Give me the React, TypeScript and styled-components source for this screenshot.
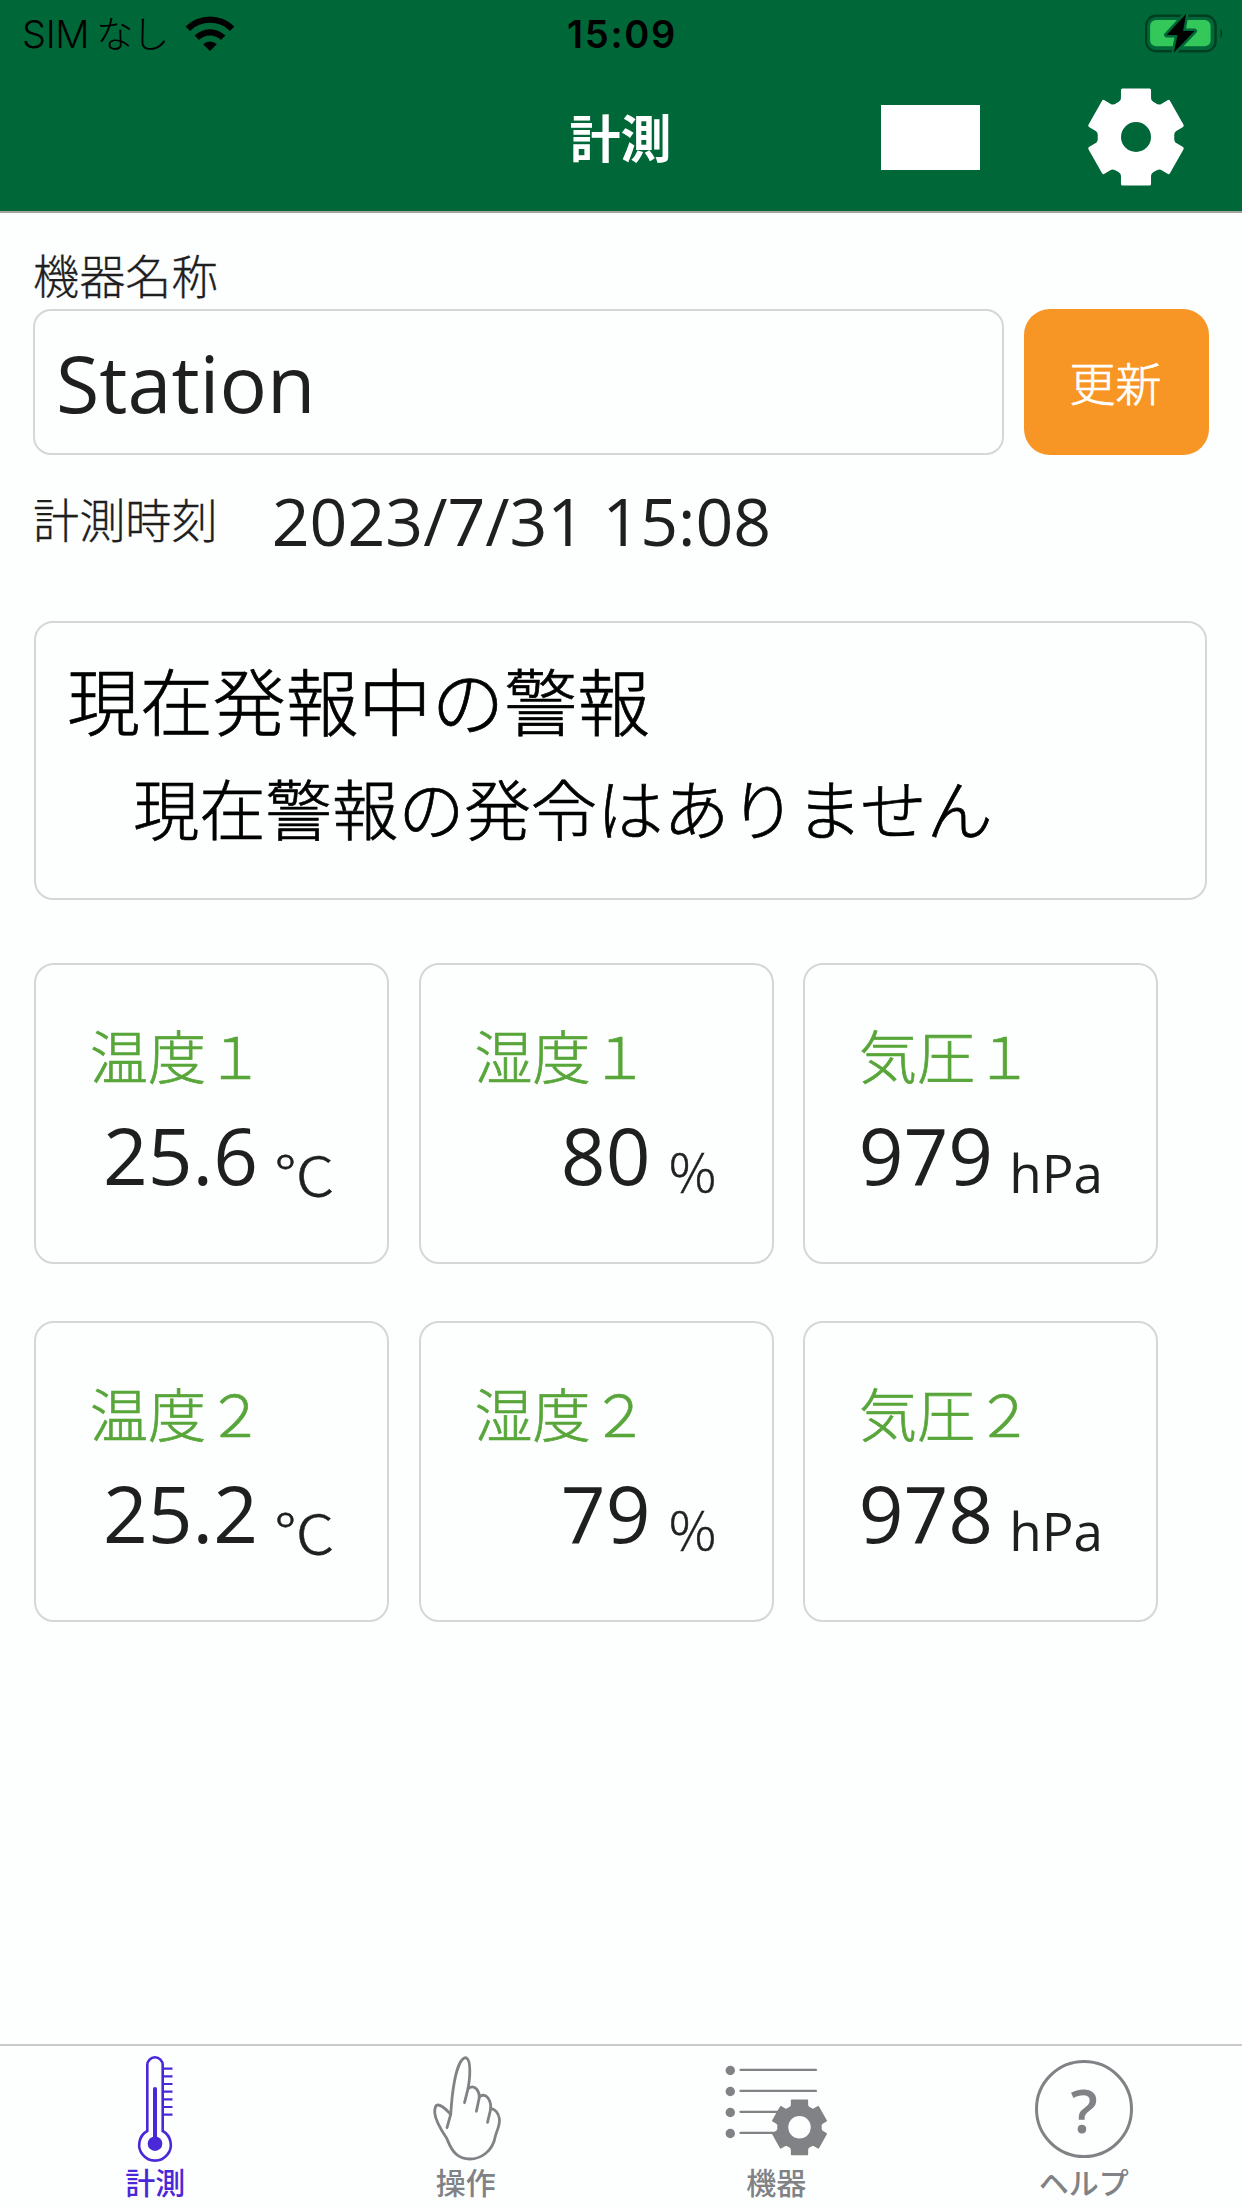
import React from "react";
import styled, { createGlobalStyle } from "styled-components";

const GREEN = "#006838";
const PURPLE = "#4a28d8";
const GRAY = "#808285";
const JP = `"Noto Sans CJK JP", sans-serif`;

const GlobalStyle = createGlobalStyle`
  html, body { margin: 0; padding: 0; }
  body { background: #fdfefe; }
  * { box-sizing: border-box; }
`;

const Screen = styled.div`
  width: 1242px;
  height: 2208px;
  display: flex;
  flex-direction: column;
  background: #fdfefe;
  color: #1f1f1f;
  font-family: "Open Sans", "Noto Sans", ${JP};
  font-weight: 380;
  overflow: hidden;
`;

const Header = styled.header`
  height: 213px;
  flex: none;
  background: ${GREEN};
  border-bottom: 2px solid #a5a5a0;
`;

const StatusBar = styled.div`
  height: 67px;
  padding: 0 17px 0 22px;
  display: grid;
  grid-template-columns: 1fr auto 1fr;
  align-items: center;
  color: #000;
`;

const Carrier = styled.div`
  display: flex;
  align-items: center;
  font: 350 38px/67px Inter, ${JP};
  white-space: nowrap;
`;

const CarrierLatin = styled.span`
  padding-top: 1px;
  letter-spacing: -0.3px;
  margin-right: 7px;
`;

const CarrierKana = styled.span`
  font-size: 37px;
  font-weight: 300;
  letter-spacing: -1px;
  margin-right: 17px;
`;

const Clock = styled.div`
  margin-right: 3px;
  padding-top: 1px;
  font: 600 38px/67px Inter, sans-serif;
  letter-spacing: 1.7px;
`;

const BatterySlot = styled.div`
  display: flex;
  justify-content: flex-end;
`;

const NavBar = styled.div`
  height: 140px;
  padding-right: 57px;
  display: grid;
  grid-template-columns: 1fr auto 1fr;
  align-items: center;
`;

const Title = styled.h1`
  grid-column: 2;
  margin: -2px 0 0 56px;
  color: #fff;
  font: 700 51px/80px ${JP};
`;

const NavActions = styled.div`
  display: flex;
  justify-content: flex-end;
  align-items: center;
  gap: 107px;
`;

const BlankButton = styled.button`
  width: 99px;
  height: 65px;
  padding: 0;
  border: 0;
  background: #fff;
`;

const Content = styled.main`
  flex: 1;
  padding: 31px 33px 0;
`;

const FieldLabel = styled.label`
  display: block;
  font: 300 46.2px/60px ${JP};
  -webkit-text-stroke: 0.3px currentColor;
`;

const NameRow = styled.div`
  display: flex;
  gap: 20px;
  margin-top: 5px;
`;

const NameInput = styled.div`
  flex: 1;
  height: 146px;
  padding-left: 21px;
  border: 2px solid #d6d6d6;
  border-radius: 18px;
  font-size: 79px;
  line-height: 143px;
`;

const UpdateButton = styled.button`
  width: 185px;
  height: 146px;
  padding: 0 2px 3px 0;
  border: 0;
  border-radius: 26px;
  background: #f79624;
  color: #fff;
  font: 300 46px/142px ${JP};
  -webkit-text-stroke: 0.7px currentColor;
`;

const TimeRow = styled.div`
  height: 80px;
  margin-top: 25px;
  display: flex;
  align-items: center;
  gap: 54px;
`;

const TimeLabel = styled(FieldLabel)`
  padding-bottom: 4px;
`;

const TimeValue = styled.div`
  font-size: 66.2px;
  line-height: 80px;
`;

const AlertPanel = styled.section`
  width: 1173px;
  height: 279px;
  margin: 61px 0 0 1px;
  padding: 21px 0 0 31px;
  border: 2px solid #d6d6d6;
  border-radius: 19px;
  color: #000;
`;

const AlertTitle = styled.h2`
  margin: 0;
  font: 300 72.9px/108px ${JP};
  -webkit-text-stroke: 0.7px currentColor;
`;

const AlertText = styled.p`
  margin: 0;
  padding-left: 66px;
  font: 300 66.3px/108px ${JP};
  -webkit-text-stroke: 0.7px currentColor;
`;

const Cards = styled.div`
  display: grid;
  grid-template-columns: repeat(3, 355px);
  gap: 57px 29.5px;
  margin: 63px 0 0 1px;
`;

const Card = styled.article`
  height: 301px;
  padding: 49px 53px 0 54px;
  border: 2px solid #d6d6d6;
  border-radius: 20px;
`;

const CardLabel = styled.h3`
  margin: 0 -20px 0 0;
  color: #58a63a;
  font: 300 58px/80px ${JP};
  -webkit-text-stroke: 0.7px currentColor;
  white-space: nowrap;
`;

const Reading = styled.div`
  display: flex;
  justify-content: flex-end;
  align-items: center;
  gap: 16px;
  margin: 10px 0 0 -8px;
  height: 100px;
  font-size: 78.4px;
  line-height: 101px;
`;

const Unit = styled.span`
  padding-top: 37px;
  font: 380 53px/60px "Open Sans", "Noto Sans", sans-serif;
`;

const PercentUnit = styled(Unit)`
  padding-top: 34px;
  font: 350 52px/60px ${JP};
  font-weight: 300;
  -webkit-text-stroke: 0.5px currentColor;
`;

const CelsiusUnit = styled(PercentUnit)`
  padding-top: 35px;
  margin-right: -1px;
  font-size: 61px;
  transform: scaleY(0.9);
  transform-origin: 50% 68px;
`;

const TabBar = styled.nav`
  height: 164px;
  flex: none;
  display: grid;
  grid-template-columns: repeat(4, 1fr);
  border-top: 2px solid #cacaca;
`;

const Tab = styled.a<{ $active?: boolean }>`
  display: flex;
  flex-direction: column;
  align-items: center;
  color: ${(p) => (p.$active ? PURPLE : GRAY)};
  font: 500 30px/38px ${JP};
`;

const TabIcon = styled.div`
  height: 116px;
  display: flex;
`;

const HelpCircle = styled.div`
  width: 98px;
  height: 98px;
  margin: 14px 5px 0 0;
  border: 3px solid ${GRAY};
  border-radius: 50%;
  text-align: center;
  font: 600 60px/94px "Open Sans", "Noto Sans", sans-serif;
`;

const HelpLabel = styled.span`
  margin-right: 6px;
`;

function Wifi() {
  return (
    <svg width="50" height="36" viewBox="-25 -35 50 36">
      <path d="M-24.4-24.4A34.5 34.5 0 0 1 24.4-24.4L20-20A28.3 28.3 0 0 0-20-20Z" />
      <path d="M-15.4-15.4A21.8 21.8 0 0 1 15.4-15.4L11-11A15.6 15.6 0 0 0-11-11Z" />
      <path d="M-6.8-6.8A9.6 9.6 0 0 1 6.8-6.8L0 0Z" />
    </svg>
  );
}

function Battery() {
  return (
    <svg width="80" height="42" viewBox="1145.4 12 80 42">
      <rect x="1146.5" y="14.8" width="69.5" height="35.4" rx="10" fill="none" stroke="#000" strokeOpacity=".4" strokeWidth="2.4" />
      <rect x="1150.5" y="19" width="60.5" height="26.2" rx="6" fill="#34c759" />
      <path d="M1221 27q3 5.500 0 11z" fillOpacity=".5" />
      <path
        d="M1186.500 12.700L1167 34H1178L1174.300 51.500L1195 30H1183.500Z"
        stroke={GREEN}
        strokeWidth="5"
        strokeLinejoin="round"
        paintOrder="stroke"
      />
    </svg>
  );
}

const ANGLES = [0, 60, 120, 180, 240, 300];

function GearShape({ hole, holeRadius }: { hole: string; holeRadius: number }) {
  return (
    <>
      <g transform="scale(.97 1)">
        <circle r="39" />
        {ANGLES.map((a) => (
          <path
            key={a}
            transform={`rotate(${a})`}
            d="M-19-30L-20-34Q-15.500-36-15.500-39V-47Q-15.500-48.500-14-48.500H14Q15.500-48.500 15.500-47V-39Q15.500-36 20-34L19-30Z"
          />
        ))}
      </g>
      <circle r={holeRadius} fill={hole} />
    </>
  );
}

function Thermometer() {
  return (
    <svg width="70" height="116" viewBox="120 2046 70 116" fill="none" stroke="currentColor" strokeWidth="2.600">
      <path d="M147.300 2131V2065A7.700 7.700 0 0 1 162.700 2065V2131A15.800 15.800 0 1 1 147.300 2131Z" />
      <path d="M155 2089V2144" strokeWidth="4" strokeLinecap="round" />
      <circle cx="155" cy="2143.700" r="7.300" fill="currentColor" stroke="none" />
      <path
        d="M163 2068.700h9.500M163 2076.400h9.500M163 2084h9.500M163 2091.700h9.500M163 2099.400h9.500M163 2107h9.500M163 2114.700h9.500"
        strokeWidth="2.200"
      />
    </svg>
  );
}

function Hand() {
  return (
    <svg width="76" height="116" viewBox="-2 -4 76 116" fill="none" stroke="currentColor" strokeWidth="2.800" strokeLinecap="round" strokeLinejoin="round">
      <path d="M20.700 64.300C21.500 53 22 45 24 34C26 22 30 8.500 35.500 7.700C39.500 8.500 40 18 39.700 25C39.500 31 38.500 36 37.700 40L34.500 52.700" />
      <path d="M38 39C40 36.500 44 36 46.500 39C49 42 49.500 45 49.200 48L46.400 61.300" />
      <path d="M49.200 47C52 44.500 55.500 44.500 58 48C60.500 51.500 61 55 60.700 59L57.500 72.300" />
      <path d="M60.700 58.500C65 59 68.500 63 69.400 69C70.200 75 67 80 65.400 86C64 94 60 100 55.500 103.500C46 111 33 110.500 26 104C20 98.500 19 93 16.700 88.300C10.500 79 5.500 70 4.800 63.300C4.500 58 5.500 55 8 55C12.500 55 16 59.500 20.700 64.300L17 77.700" />
    </svg>
  );
}

function DeviceList() {
  return (
    <svg width="104" height="116" viewBox="724 2046 104 116" fill="currentColor">
      {[2070.5, 2091.5, 2112.5, 2133.5].map((y, i) => (
        <g key={y}>
          <circle cx="730.300" cy={y} r="4.700" />
          <path d={`M740.500 ${y - 0.6}H${i < 2 ? 816 : 780}`} stroke="currentColor" strokeWidth="2.200" strokeLinecap="round" />
        </g>
      ))}
      <g transform="translate(799.500 2127.300) scale(.575)">
        <GearShape hole="#fdfefe" holeRadius={19.5} />
      </g>
    </svg>
  );
}

type Sensor = { label: string; value: string; unit: string };

const SENSORS: Sensor[] = [
  { label: "温度１", value: "25.6", unit: "℃" },
  { label: "湿度１", value: "80", unit: "％" },
  { label: "気圧１", value: "979", unit: "hPa" },
  { label: "温度２", value: "25.2", unit: "℃" },
  { label: "湿度２", value: "79", unit: "％" },
  { label: "気圧２", value: "978", unit: "hPa" },
];

function unitComponent(unit: string) {
  if (unit === "℃") return CelsiusUnit;
  if (unit === "％") return PercentUnit;
  return Unit;
}

function SensorCard({ label, value, unit }: Sensor) {
  const UnitText = unitComponent(unit);
  return (
    <Card>
      <CardLabel>{label}</CardLabel>
      <Reading>
        <span>{value}</span>
        <UnitText>{unit}</UnitText>
      </Reading>
    </Card>
  );
}

export default function App() {
  return (
    <>
      <GlobalStyle />
      <Screen>
        <Header>
          <StatusBar>
            <Carrier>
              <CarrierLatin>SIM</CarrierLatin>
              <CarrierKana>なし</CarrierKana>
              <Wifi />
            </Carrier>
            <Clock>15:09</Clock>
            <BatterySlot>
              <Battery />
            </BatterySlot>
          </StatusBar>
          <NavBar>
            <Title>計測</Title>
            <NavActions>
              <BlankButton aria-label="blank" />
              <svg width="98" height="98" viewBox="-49 -49 98 98" fill="#fff">
                <GearShape hole={GREEN} holeRadius={15} />
              </svg>
            </NavActions>
          </NavBar>
        </Header>
        <Content>
          <FieldLabel>機器名称</FieldLabel>
          <NameRow>
            <NameInput>Station</NameInput>
            <UpdateButton>更新</UpdateButton>
          </NameRow>
          <TimeRow>
            <TimeLabel as="span">計測時刻</TimeLabel>
            <TimeValue>2023/7/31 15:08</TimeValue>
          </TimeRow>
          <AlertPanel>
            <AlertTitle>現在発報中の警報</AlertTitle>
            <AlertText>現在警報の発令はありません</AlertText>
          </AlertPanel>
          <Cards>
            {SENSORS.map((s) => (
              <SensorCard key={s.label} {...s} />
            ))}
          </Cards>
        </Content>
        <TabBar>
          <Tab $active>
            <TabIcon>
              <Thermometer />
            </TabIcon>
            計測
          </Tab>
          <Tab>
            <TabIcon>
              <Hand />
            </TabIcon>
            操作
          </Tab>
          <Tab>
            <TabIcon>
              <DeviceList />
            </TabIcon>
            機器
          </Tab>
          <Tab>
            <TabIcon>
              <HelpCircle>?</HelpCircle>
            </TabIcon>
            <HelpLabel>ヘルプ</HelpLabel>
          </Tab>
        </TabBar>
      </Screen>
    </>
  );
}
